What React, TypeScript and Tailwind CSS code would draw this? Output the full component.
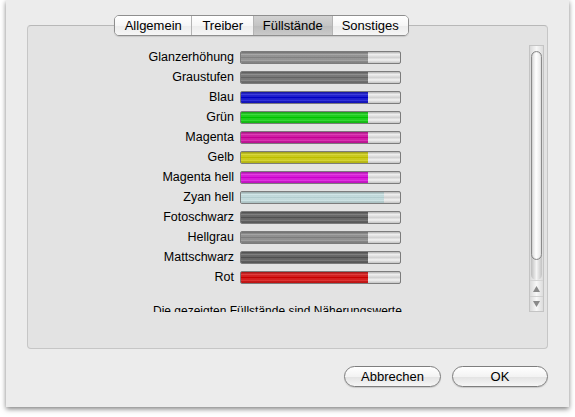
import React from "react";

type Ink = { label: string; fill: string; level: number };

const inks: Ink[] = [
    { label: "Glanzerhöhung", fill: "bg-[#8c8c8c]", level: 80 },
    { label: "Graustufen", fill: "bg-[#6c6c6c]", level: 80 },
    { label: "Blau", fill: "bg-[#0000d2]", level: 80 },
    { label: "Grün", fill: "bg-[#00d200]", level: 80 },
    { label: "Magenta", fill: "bg-[#d400a0]", level: 80 },
    { label: "Gelb", fill: "bg-[#cdcd00]", level: 80 },
    { label: "Magenta hell", fill: "bg-[#dc00dc]", level: 80 },
    { label: "Zyan hell", fill: "bg-[#c4e0e2]", level: 90 },
    { label: "Fotoschwarz", fill: "bg-[#585858]", level: 80 },
    { label: "Hellgrau", fill: "bg-[#888888]", level: 80 },
    { label: "Mattschwarz", fill: "bg-[#565656]", level: 80 },
    { label: "Rot", fill: "bg-[#d80000]", level: 80 },
];

const tabs = [
    { name: "Allgemein", w: "w-[77px]" },
    { name: "Treiber", w: "w-[62px]" },
    { name: "Füllstände", w: "w-[79px]", active: true },
    { name: "Sonstiges", w: "w-[77px]" },
];

function LevelBar({ fill, level }: { fill: string; level: number }) {
    return (
        <div className="relative w-[161px] h-[13px] rounded-[2px] border border-[#7c7c7c] overflow-hidden bg-[linear-gradient(to_bottom,#b4b4b4,#efefef_22%,#d2d2d2_50%,#f2f2f2_72%,#c4c4c4)]">
            <div className={`h-full ${fill} relative`} style={{ width: `${level}%` }}>
                <div className="absolute inset-0 bg-[linear-gradient(to_bottom,rgba(0,0,0,0.3),rgba(255,255,255,0.22)_20%,rgba(0,0,0,0.06)_50%,rgba(255,255,255,0.18)_75%,rgba(0,0,0,0.18))]" />
                <div className="absolute inset-0 bg-[repeating-linear-gradient(to_bottom,rgba(255,255,255,0.05)_0px,rgba(255,255,255,0.05)_1px,rgba(0,0,0,0.03)_1px,rgba(0,0,0,0.03)_2px)]" />
            </div>
        </div>
    );
}

function Scrollbar() {
    return (
        <div className="w-[15px] h-[267px] flex flex-col border border-[#c4c4c4] bg-[linear-gradient(to_right,#dadada,#f7f7f7_50%,#dcdcdc)]">
            {/* track */}
            <div className="flex-1 relative px-[1px] pt-[5px]">
                <div className="absolute left-[1px] right-[1px] bottom-0 h-[40px] rounded-b-full bg-[linear-gradient(to_right,#bdbdbd,#f4f4f4_50%,#c2c2c2)]" />
                <div className="relative h-[209px] rounded-full border border-[#8a8a8a] bg-[linear-gradient(to_right,#d8d8d8,#ffffff_45%,#e6e6e6)] shadow-[inset_0_0_1px_rgba(0,0,0,0.3)]" />
            </div>
            {/* arrows */}
            <div className="h-[16px] flex items-center justify-center border-t border-[#d4d4d4]">
                <svg width="7" height="6" viewBox="0 0 7 6"><path d="M3.5 0L7 6H0z" fill="#8a8a8a" /></svg>
            </div>
            <div className="h-[15px] flex items-center justify-center border-t border-[#d0d0d0]">
                <svg width="7" height="6" viewBox="0 0 7 6"><path d="M0 0H7L3.5 6z" fill="#8a8a8a" /></svg>
            </div>
        </div>
    );
}

export default function App() {
    return (
        <div className="w-[575px] h-[417px] bg-white overflow-hidden font-['Liberation_Sans',Arial,sans-serif] text-black">
            <div className="ml-[6px] w-[563px] h-[407px] bg-[#ececec] shadow-[0_2px_5px_rgba(0,0,0,0.5)] flex flex-col px-[21px] pt-[15px]">
                {/* Tabs */}
                <div className="relative z-10 ml-[87px] flex h-[21px] w-[295px] rounded-[5px] border border-[#8e8e8e] overflow-hidden shadow-[0_1px_1px_rgba(0,0,0,0.12)]">
                    {tabs.map((t, i) => (
                        <div
                            key={t.name}
                            className={`${t.w} flex items-center justify-center text-[13px] leading-none ${i > 0 ? "border-l border-[#b4b4b4]" : ""} ${t.active ? "bg-[linear-gradient(to_bottom,#d2d2d2,#c4c4c4_50%,#bababa_51%,#cacaca)]" : "bg-[linear-gradient(to_bottom,#ffffff,#f6f6f6_50%,#ececec_51%,#f6f6f6)]"}`}
                        >
                            {t.name}
                        </div>
                    ))}
                </div>

                {/* Tab box */}
                <div className="-mt-[11px] h-[324px] rounded-[4px] border border-[#c6c6c6] border-t-[#b8b8b8] bg-[#e3e3e3] pt-[19px] pl-[12px] pr-[3px]">
                    <div className="flex h-[267px]">
                        <div className="flex-1 h-full overflow-hidden pt-[2px]">
                            {inks.map((ink) => (
                                <div key={ink.label} className="h-[20px] flex items-center">
                                    <div className="w-[200px] pr-[6px] text-right text-[12.5px] leading-none">{ink.label}</div>
                                    <LevelBar fill={ink.fill} level={ink.level} />
                                </div>
                            ))}
                            <p className="mt-[17px] pl-[113px] text-[12px] leading-[15px] whitespace-nowrap">
                                Die gezeigten Füllstände sind Näherungswerte
                            </p>
                        </div>
                        <Scrollbar />
                    </div>
                </div>

                {/* Buttons */}
                <div className="mt-[17px] flex justify-end gap-[11px]">
                    <button className="w-[97px] h-[21px] rounded-full border border-[#7e7e7e] bg-[linear-gradient(to_bottom,#ffffff,#f3f3f3_50%,#e4e4e4_55%,#f6f6f6)] text-[13px] leading-none shadow-[0_1px_1px_rgba(0,0,0,0.15)]">
                        Abbrechen
                    </button>
                    <button className="w-[96px] h-[21px] rounded-full border border-[#7e7e7e] bg-[linear-gradient(to_bottom,#ffffff,#f3f3f3_50%,#e4e4e4_55%,#f6f6f6)] text-[13px] leading-none shadow-[0_1px_1px_rgba(0,0,0,0.15)]">
                        OK
                    </button>
                </div>
            </div>
        </div>
    );
}
